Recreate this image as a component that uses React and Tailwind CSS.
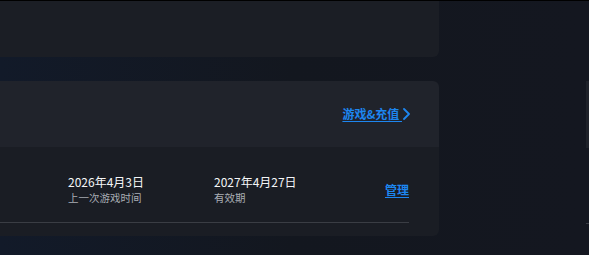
const font = { fontFamily: '"Noto Sans CJK SC", "Noto Sans", sans-serif' };

function DateCell({ date, label, className }) {
  return (
    <div className={`flex flex-col ${className}`}>
      <span className="text-[12px] leading-[16px] text-[#f4f5f7]">{date}</span>
      <span className="text-[10.5px] leading-[16px] text-[#a9adb4]">{label}</span>
    </div>
  );
}

export default function App() {
  return (
    <div
      className="w-[589px] h-[255px] overflow-hidden border-t border-black bg-gradient-to-r from-[#121a29] via-[#13171f] to-[#141720] flex"
      style={font}
    >
      {/* main column */}
      <div className="w-[439px] flex flex-col">
        <div className="h-[56px] bg-[#1b1e25] rounded-br-md" />

        <div className="mt-[24px] rounded-r-md overflow-hidden">
          {/* header */}
          <div className="h-[66px] bg-[#20232b] flex items-center justify-end pr-[29px]">
            <a className="flex items-center text-[12px] font-bold text-[#1d86f0] cursor-pointer">
              <span className="underline underline-offset-2">游戏&amp;充值&nbsp;</span>
              <svg width="7" height="12" viewBox="0 0 7 12" className="ml-[1px]" fill="none">
                <polyline points="1,1 6,6 1,11" stroke="#1d86f0" strokeWidth="1.8" strokeLinejoin="round" strokeLinecap="round" />
              </svg>
            </a>
          </div>

          {/* game row */}
          <div className="h-[89px] bg-[#1a1d24] flex flex-col">
            <div className="w-[409px] h-[76px] border-b border-[#3a3d44] flex items-center pt-[10px]">
              <DateCell date="2026年4月3日" label="上一次游戏时间" className="ml-[68px] w-[146px]" />
              <DateCell date="2027年4月27日" label="有效期" className="w-[100px]" />
              <a className="ml-auto text-[12px] font-bold text-[#1d86f0] underline underline-offset-2 cursor-pointer mt-[1px]">
                管理
              </a>
            </div>
          </div>
        </div>
      </div>

      <div className="flex-1" />

      {/* edge of the next column */}
      <div className="w-[3px] flex flex-col">
        <div className="h-[80px]" />
        <div className="h-[67px] bg-[#1f222a]" />
        <div className="h-[75px]" />
        <div className="h-[1px] bg-[#3a3d44]" />
      </div>
    </div>
  );
}
